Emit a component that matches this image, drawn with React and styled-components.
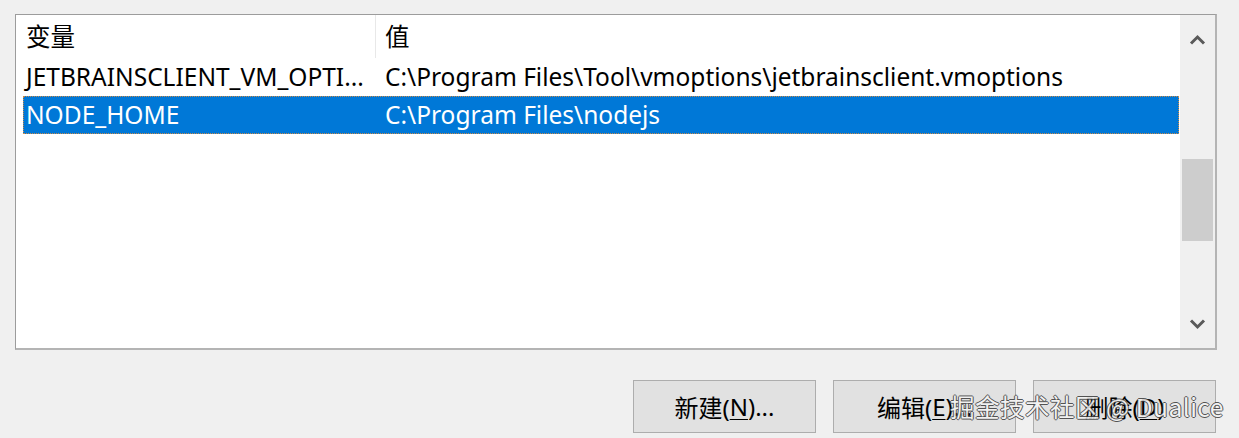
import React from 'react'
import styled, { createGlobalStyle } from 'styled-components'

const GlobalStyle = createGlobalStyle`
  html, body {
    margin: 0;
    padding: 0;
    background: #f0f0f0;
  }
  body {
    font-family: 'Noto Sans', 'Noto Sans CJK SC', sans-serif;
    color: #000;
  }
`

const Page = styled.div`
  position: relative;
  width: 1239px;
  height: 438px;
  overflow: hidden;
  padding: 14px 22px 0 15px;
  box-sizing: border-box;
`

const ListBox = styled.div`
  height: 336px;
  box-sizing: border-box;
  border: 1px solid #9c9c9c;
  border-right-width: 2px;
  border-bottom-width: 2px;
  border-right-color: #b4b4b4;
  border-bottom-color: #b4b4b4;
  background: #fff;
  display: flex;
`

const ListArea = styled.div`
  flex: 1;
  display: flex;
  flex-direction: column;
  padding-left: 7px;
`

const HeaderRow = styled.div`
  height: 43px;
  display: flex;
  align-items: stretch;
  font-size: 24.5px;
`

const HeaderCell = styled.div`
  width: ${({ w }) => (w ? `${w}px` : 'auto')};
  flex: ${({ w }) => (w ? 'none' : '1')};
  display: flex;
  align-items: center;
  padding-left: ${({ pl }) => pl}px;
  padding-bottom: 2px;
  box-sizing: border-box;
  border-right: ${({ divider }) => (divider ? '1px solid #e8e8e8' : 'none')};
`

const Row = styled.div`
  height: 38px;
  display: flex;
  align-items: center;
  font-size: 24.5px;
  background: ${({ selected }) => (selected ? '#0078d7' : 'transparent')};
  color: ${({ selected }) => (selected ? '#fff' : '#000')};
  outline: ${({ selected }) => (selected ? '1px dotted #c88a4a' : 'none')};
  outline-offset: -1px;
  margin-right: 1px;
`

const Cell = styled.div`
  width: ${({ w }) => (w ? `${w}px` : 'auto')};
  flex: ${({ w }) => (w ? 'none' : '1')};
  padding-left: ${({ pl }) => pl}px;
  box-sizing: border-box;
  white-space: nowrap;
  overflow: hidden;
  line-height: 38px;
`

const ScrollBar = styled.div`
  width: 35px;
  background: #f0f0f0;
  display: flex;
  flex-direction: column;
  align-items: center;
`

const ArrowBox = styled.div`
  height: 48px;
  width: 100%;
  display: flex;
  align-items: center;
  justify-content: center;
`

const Track = styled.div`
  flex: 1;
  width: 100%;
  padding: 96px 2px 0 2px;
  box-sizing: border-box;
`

const Thumb = styled.div`
  height: 82px;
  background: #cdcdcd;
`

const ButtonBar = styled.div`
  display: flex;
  justify-content: flex-end;
  gap: 17px;
  margin-top: 30px;
  margin-right: 1px;
`

const Button = styled.button`
  width: 183px;
  height: 53px;
  background: #e1e1e1;
  border: 1px solid #adadad;
  font-family: 'Noto Sans', 'Noto Sans CJK SC', sans-serif;
  font-size: 24px;
  color: #000;
  padding: 0;
  display: flex;
  align-items: center;
  justify-content: center;

  u {
    text-decoration-thickness: 1px;
    text-underline-offset: 3px;
  }
`

const Watermark = styled.div`
  position: absolute;
  left: 950px;
  top: 391px;
  font-family: 'Noto Sans CJK SC', 'Noto Sans', sans-serif;
  font-size: 24.5px;
  line-height: 32px;
  color: #f4f4f4;
  letter-spacing: 0.5px;
  white-space: nowrap;
  text-shadow: 1px 0 0 #3a3a3a, -1px 0 0 #3a3a3a, 0 1px 0 #3a3a3a, 0 -1px 0 #3a3a3a;
  opacity: 0.85;
`

const Chevron = ({ up }) => (
  <svg width="17" height="11" viewBox="0 0 17 11">
    <path
      d={up ? 'M2 9.5 L8.5 3 L15 9.5' : 'M2 1.5 L8.5 8 L15 1.5'}
      fill="none"
      stroke="#5a5a5a"
      strokeWidth="3"
    />
  </svg>
)

const rows = [
  { name: 'JETBRAINSCLIENT_VM_OPTI...', value: 'C:\\Program Files\\Tool\\vmoptions\\jetbrainsclient.vmoptions' },
  { name: 'NODE_HOME', value: 'C:\\Program Files\\nodejs', selected: true },
]

export default function App() {
  return (
    <Page>
      <GlobalStyle />
      <ListBox>
        <ListArea>
          <HeaderRow>
            <HeaderCell w={353} pl={3} divider>变量</HeaderCell>
            <HeaderCell pl={9}>值</HeaderCell>
          </HeaderRow>
          {rows.map((r) => (
            <Row key={r.name} selected={r.selected}>
              <Cell w={353} pl={3}>{r.name}</Cell>
              <Cell pl={9}>{r.value}</Cell>
            </Row>
          ))}
        </ListArea>
        <ScrollBar>
          <ArrowBox><Chevron up /></ArrowBox>
          <Track><Thumb /></Track>
          <ArrowBox><Chevron /></ArrowBox>
        </ScrollBar>
      </ListBox>
      <ButtonBar>
        <Button>新建(<u>N</u>)...</Button>
        <Button>编辑(<u>E</u>)...</Button>
        <Button>删除(<u>D</u>)</Button>
      </ButtonBar>
      <Watermark>掘金技术社区 @ Dualice</Watermark>
    </Page>
  )
}
